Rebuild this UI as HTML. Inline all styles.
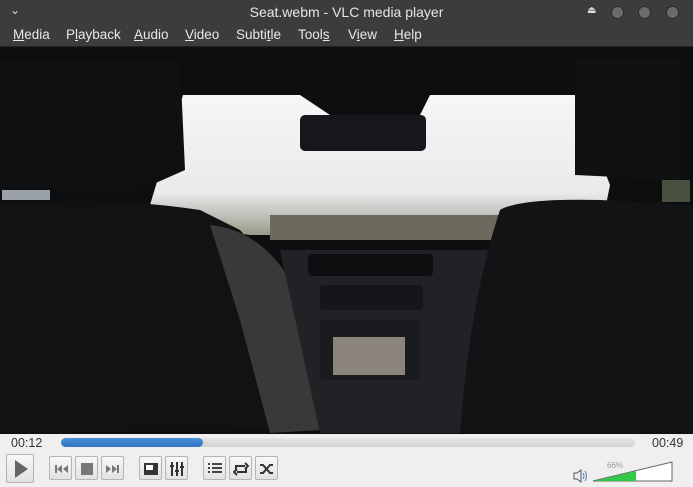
<!DOCTYPE html>
<html><head><meta charset="utf-8"><style>
*{margin:0;padding:0;box-sizing:border-box}
body{width:693px;height:487px;overflow:hidden;background:#efefef;font-family:"Liberation Sans",sans-serif;position:relative}
#tb{position:absolute;left:0;top:0;width:693px;height:47px;background:#3b3c3e;border-bottom:1px solid #222}
#title{position:absolute;left:0;width:693px;top:4px;text-align:center;color:#e6e6e6;font-size:14px}
.menu{position:absolute;top:27px;color:#e8e8e8;font-size:13.5px}
.menu u{text-decoration:underline}
.circ{position:absolute;top:6px;width:13px;height:13px;border-radius:50%;background:#6a6b6d;border:1px solid #2a2a2a}
#vid{position:absolute;left:0;top:47px}
.t{position:absolute;top:436px;font-size:12.5px;color:#333}
#pb{position:absolute;left:61px;top:438px;width:574px;height:9px;border-radius:5px;background:linear-gradient(#e4e4e4,#d2d2d2)}
#pf{position:absolute;left:61px;top:438px;width:142px;height:9px;border-radius:5px;background:linear-gradient(#4a90d8,#2f74c0)}
.b{position:absolute;top:456px;width:23px;height:24px;border:1px solid #b4b4b4;border-radius:2px;background:linear-gradient(#f8f8f8,#e2e2e2)}
.b svg{position:absolute;left:3px;top:4px}
</style></head><body>
<div id="tb">
<div style="position:absolute;left:10px;top:3px;color:#ddd;font-size:12px">⌄</div>
<div id="title">Seat.webm - VLC media player</div>
<div style="position:absolute;left:587px;top:5px;color:#ddd;font-size:10px">⏏</div>
<div class="circ" style="left:611px"></div><div class="circ" style="left:638px"></div><div class="circ" style="left:666px"></div>
<div class="menu" style="left:13px"><u>M</u>edia</div>
<div class="menu" style="left:66px">P<u>l</u>ayback</div>
<div class="menu" style="left:134px"><u>A</u>udio</div>
<div class="menu" style="left:185px"><u>V</u>ideo</div>
<div class="menu" style="left:236px">Subti<u>t</u>le</div>
<div class="menu" style="left:298px">Tool<u>s</u></div>
<div class="menu" style="left:348px">V<u>i</u>ew</div>
<div class="menu" style="left:394px"><u>H</u>elp</div>
</div>
<svg id="vid" width="693" height="387" viewBox="0 47 693 387">
<defs><linearGradient id="sky" x1="0" y1="0" x2="0" y2="1"><stop offset="0" stop-color="#f6f6f6"/><stop offset="0.7" stop-color="#e8eaec"/><stop offset="1" stop-color="#9a9a8a"/></linearGradient></defs>
<rect x="0" y="47" width="693" height="387" fill="#0d0e10"/>
<path d="M183 95 L300 95 L330 115 L420 115 L430 95 L575 95 L610 185 L600 235 L250 235 L180 225 L150 205 Z" fill="url(#sky)"/>
<rect x="270" y="215" width="230" height="25" fill="#6c6a5c"/>
<rect x="2" y="170" width="48" height="30" fill="#9aa0a8"/>
<rect x="662" y="180" width="28" height="22" fill="#4a5040"/>
<rect x="300" y="115" width="126" height="36" rx="5" fill="#16171a"/>
<path d="M0 205 Q100 195 200 210 L240 230 L300 300 L320 430 L0 433 Z" fill="#111214"/>
<path d="M210 225 Q260 230 290 280 L320 430 L270 433 L240 320 Z" fill="#3a3838"/>
<path d="M280 250 L490 250 L480 433 L320 433 Z" fill="#202226"/>
<rect x="308" y="254" width="125" height="22" rx="4" fill="#0d0e10"/>
<rect x="320" y="285" width="103" height="25" rx="4" fill="#15161a"/>
<rect x="320" y="320" width="100" height="60" rx="3" fill="#1a1b1e"/>
<rect x="333" y="337" width="72" height="38" fill="#8a847c"/>
<path d="M500 210 Q520 198 600 200 L693 205 L693 433 L460 433 Q470 300 500 210 Z" fill="#121315"/>
<path d="M575 60 L680 60 L680 180 L575 175 Z" fill="#101113"/>
<path d="M0 60 L180 60 L185 170 L140 190 L0 190 Z" fill="#0f1012"/>
</svg>
<div class="t" style="left:11px">00:12</div>
<div class="t" style="left:652px">00:49</div>
<div id="pb"></div><div id="pf"></div>
<div class="b" style="left:6px;top:454px;width:28px;height:29px"><svg width="20" height="20" style="left:4px;top:4px"><path d="M4 1 L17 10 L4 19Z" fill="#666"/></svg></div>
<div class="b" style="left:49px"><svg width="16" height="16"><path d="M2 4h2v8H2zM9 4v8L4 8zM15 4v8l-5-4z" fill="#777"/></svg></div>
<div class="b" style="left:75px"><svg width="16" height="16"><rect x="2" y="2" width="12" height="12" fill="#777"/></svg></div>
<div class="b" style="left:101px"><svg width="16" height="16"><path d="M1 4v8l5-4zM7 4v8l5-4zM12 4h2v8h-2z" fill="#777"/></svg></div>
<div class="b" style="left:139px"><svg width="16" height="16"><rect x="1" y="2" width="14" height="12" fill="#333"/><rect x="3" y="4" width="7" height="5" fill="#fff"/></svg></div>
<div class="b" style="left:165px"><svg width="16" height="16"><path d="M3 1v14M8 1v14M13 1v14" stroke="#333" stroke-width="2"/><path d="M1 5h4M6 10h4M11 6h4" stroke="#333" stroke-width="2"/></svg></div>
<div class="b" style="left:203px"><svg width="16" height="16"><path d="M1 3h2M1 7h2M1 11h2M5 3h10M5 7h10M5 11h10" stroke="#444" stroke-width="2"/></svg></div>
<div class="b" style="left:229px"><svg width="16" height="16"><path d="M3 10V5h9M12 2l3 3-3 3M13 6v5H4M4 14l-3-3 3-3" stroke="#333" stroke-width="2" fill="none"/></svg></div>
<div class="b" style="left:255px"><svg width="16" height="16"><path d="M1 4h3l7 8h3M1 12h3l7-8h3" stroke="#333" stroke-width="2" fill="none"/></svg></div>
<svg style="position:absolute;left:573px;top:469px" width="16" height="14"><path d="M1 4h3l4-3v12l-4-3H1z" fill="none" stroke="#555"/><path d="M10 4q2 3 0 6M12 2q3 5 0 10" stroke="#4a7fc0" fill="none"/></svg>
<div style="position:absolute;left:607px;top:461px;font-size:8px;color:#999">66%</div>
<svg style="position:absolute;left:592px;top:460px" width="82" height="23"><path d="M1 21 L80 2 L80 21 Z" fill="#fff" stroke="#666"/><path d="M2 21 L44 11 L44 21 Z" fill="#33c94a"/></svg>
</body></html>
